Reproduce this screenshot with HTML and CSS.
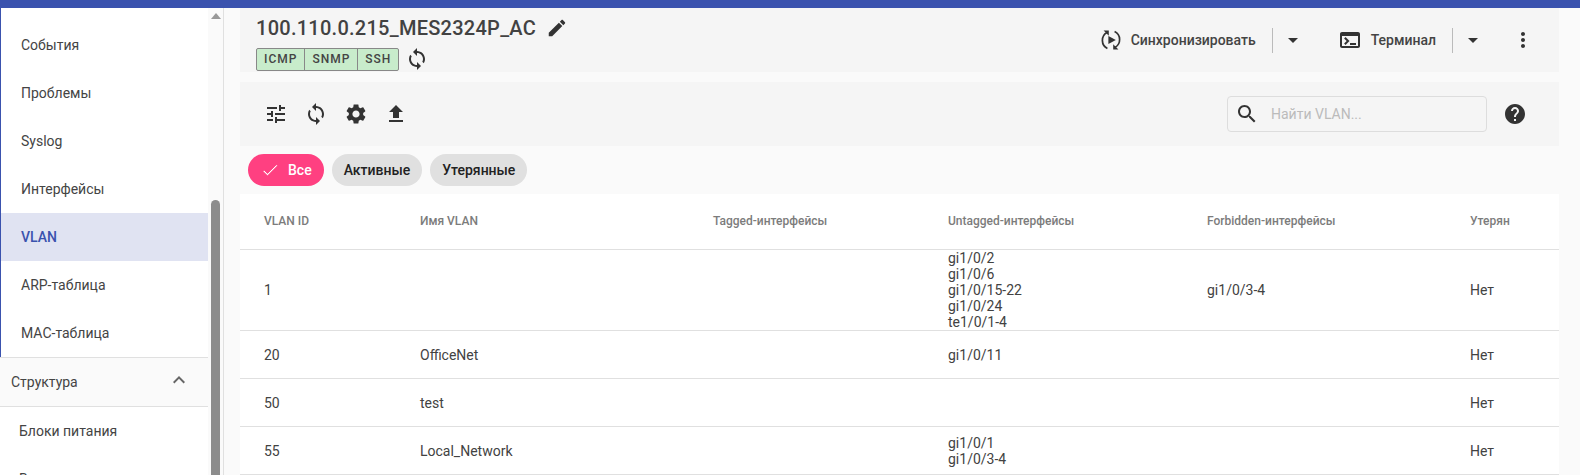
FILE: index.html
```html
<!DOCTYPE html>
<html lang="ru">
<head>
    <meta charset="UTF-8">
    <title>VLAN</title>
    <link rel="stylesheet" href="styles.css">
</head>
<body>
<div class="topBar"></div>
<div class="layout">
    <div class="sidebar">
        <div class="nav">
            <ul class="navGroup">
                <li>События</li>
                <li>Проблемы</li>
                <li>Syslog</li>
                <li>Интерфейсы</li>
                <li class="active">VLAN</li>
                <li>ARP-таблица</li>
                <li>MAC-таблица</li>
            </ul>
            <div class="navHead">
                <span>Структура</span>
                <svg class="icon" viewBox="0 0 24 24"><path d="M12 8l-6 6 1.41 1.41L12 10.83l4.59 4.58L18 14z"/></svg>
            </div>
            <ul class="navSub">
                <li>Блоки питания</li>
                <li>Вентиляторы</li>
            </ul>
        </div>
        <div class="scrollBar">
            <div class="scrollUp"></div>
            <div class="scrollThumb"></div>
        </div>
    </div>
    <div class="main">
        <div class="header">
            <div class="devInfo">
                <div class="devTitle">
                    <span>100.110.0.215_MES2324P_AC</span>
                    <svg class="icon editIcon" viewBox="0 0 24 24"><path d="M3 17.25V21h3.75L17.81 9.94l-3.75-3.75L3 17.25zM20.71 7.04c.39-.39.39-1.02 0-1.41l-2.34-2.34c-.39-.39-1.02-.39-1.41 0l-1.83 1.83 3.75 3.75 1.83-1.83z"/></svg>
                </div>
                <div class="devStatus">
                    <div class="badges">
                        <span>ICMP</span>
                        <span>SNMP</span>
                        <span>SSH</span>
                    </div>
                    <svg class="icon" viewBox="0 0 24 24"><path d="M12 4V1L8 5l4 4V6c3.31 0 6 2.69 6 6 0 1.01-.25 1.97-.7 2.8l1.46 1.46C19.54 15.03 20 13.57 20 12c0-4.42-3.58-8-8-8zm0 14c-3.31 0-6-2.69-6-6 0-1.01.25-1.97.7-2.8L5.24 7.74C4.46 8.97 4 10.43 4 12c0 4.42 3.58 8 8 8v3l4-4-4-4v3z"/></svg>
                </div>
            </div>
            <div class="actions">
                <svg class="icon" viewBox="0 0 24 24">
                    <path d="M9.4 8v8l7.4-4z"/>
                    <path d="M8 4.6A8.9 8.9 0 0 0 8.4 20.4" fill="none" stroke="#333" stroke-width="1.7"/>
                    <path d="M16 19.4A8.9 8.9 0 0 0 15.6 3.6" fill="none" stroke="#333" stroke-width="1.7"/>
                    <path d="M4.6 2.6h5.2v5.2zM19.4 21.4h-5.2v-5.2z"/>
                </svg>
                <span class="actionText">Синхронизировать</span>
                <i class="divider"></i>
                <svg class="icon dropIcon" viewBox="0 0 24 24"><path d="M7 10l5 5 5-5z"/></svg>
                <svg class="icon termIcon" viewBox="0 0 24 24"><path d="M20 4H4c-1.1 0-2 .9-2 2v12c0 1.1.9 2 2 2h16c1.1 0 2-.9 2-2V6c0-1.1-.9-2-2-2zm0 14H4V8h16v10zm-2-1h-6v-2h6v2zM7.5 17l-1.41-1.41L8.67 13l-2.59-2.59L7.5 9l4 4-4 4z"/></svg>
                <span class="actionText termText">Терминал</span>
                <i class="divider"></i>
                <svg class="icon dropIcon" viewBox="0 0 24 24"><path d="M7 10l5 5 5-5z"/></svg>
                <svg class="icon moreIcon" viewBox="0 0 24 24"><path d="M12 8c1.1 0 2-.9 2-2s-.9-2-2-2-2 .9-2 2 .9 2 2 2zm0 2c-1.1 0-2 .9-2 2s.9 2 2 2 2-.9 2-2-.9-2-2-2zm0 6c-1.1 0-2 .9-2 2s.9 2 2 2 2-.9 2-2-.9-2-2-2z"/></svg>
            </div>
        </div>
        <div class="toolbar">
            <div class="tools">
                <svg class="icon" viewBox="0 0 24 24"><path d="M3 17v2h6v-2H3zM3 5v2h10V5H3zm10 16v-2h8v-2h-8v-2h-2v6h2zM7 9v2H3v2h4v2h2V9H7zm14 4v-2H11v2h10zm-6-4h2V7h4V5h-4V3h-2v6z"/></svg>
                <svg class="icon" viewBox="0 0 24 24"><path d="M12 4V1L8 5l4 4V6c3.31 0 6 2.69 6 6 0 1.01-.25 1.97-.7 2.8l1.46 1.46C19.54 15.03 20 13.57 20 12c0-4.42-3.58-8-8-8zm0 14c-3.31 0-6-2.69-6-6 0-1.01.25-1.97.7-2.8L5.24 7.74C4.46 8.97 4 10.43 4 12c0 4.42 3.58 8 8 8v3l4-4-4-4v3z"/></svg>
                <svg class="icon" viewBox="0 0 24 24"><path d="M19.14 12.94c.04-.3.06-.61.06-.94 0-.32-.02-.64-.07-.94l2.03-1.58c.18-.14.23-.41.12-.61l-1.92-3.32c-.12-.22-.37-.29-.59-.22l-2.39.96c-.5-.38-1.03-.7-1.62-.94l-.36-2.54c-.04-.24-.24-.41-.48-.41h-3.84c-.24 0-.43.17-.47.41l-.36 2.54c-.59.24-1.13.57-1.62.94l-2.39-.96c-.22-.08-.47 0-.59.22L2.74 8.87c-.12.21-.08.47.12.61l2.03 1.58c-.05.3-.09.63-.09.94s.02.64.07.94l-2.03 1.58c-.18.14-.23.41-.12.61l1.92 3.32c.12.22.37.29.59.22l2.39-.96c.5.38 1.03.7 1.62.94l.36 2.54c.05.24.24.41.48.41h3.84c.24 0 .44-.17.47-.41l.36-2.54c.59-.24 1.13-.56 1.62-.94l2.39.96c.22.08.47 0 .59-.22l1.92-3.32c.12-.22.07-.47-.12-.61l-2.01-1.58zM12 15.6c-1.98 0-3.6-1.62-3.6-3.6s1.62-3.6 3.6-3.6 3.6 1.62 3.6 3.6-1.62 3.6-3.6 3.6z"/></svg>
                <svg class="icon" viewBox="0 0 24 24"><path d="M9 16h6v-6h4l-7-7-7 7h4zm-4 2h14v2H5z"/></svg>
            </div>
            <div class="searchBox">
                <svg class="icon" viewBox="0 0 24 24"><path d="M15.5 14h-.79l-.28-.27C15.41 12.59 16 11.11 16 9.5 16 5.91 13.09 3 9.5 3S3 5.91 3 9.5 5.91 16 9.5 16c1.61 0 3.09-.59 4.23-1.57l.27.28v.79l5 4.99L20.49 19l-4.99-5zm-6 0C7.01 14 5 11.99 5 9.5S7.01 5 9.5 5 14 7.01 14 9.5 11.99 14 9.5 14z"/></svg>
                <span>Найти VLAN...</span>
            </div>
            <svg class="icon helpIcon" viewBox="0 0 24 24"><path d="M12 2C6.48 2 2 6.48 2 12s4.48 10 10 10 10-4.48 10-10S17.52 2 12 2zm1 17h-2v-2h2v2zm2.07-7.75l-.9.92C13.45 12.9 13 13.5 13 15h-2v-.5c0-1.1.45-2.1 1.17-2.83l1.24-1.26c.37-.36.59-.86.59-1.41 0-1.1-.9-2-2-2s-2 .9-2 2H8c0-2.21 1.79-4 4-4s4 1.79 4 4c0 .88-.36 1.68-.93 2.25z"/></svg>
        </div>
        <div class="chips">
            <div class="chip chipOn">
                <svg viewBox="0 0 24 24"><path d="M9 16.17L4.83 12l-1.42 1.41L9 19 21 7l-1.41-1.41z"/></svg>
                Все
            </div>
            <div class="chip">Активные</div>
            <div class="chip">Утерянные</div>
        </div>
        <table class="vlanTable">
            <colgroup>
                <col class="c1"><col class="c2"><col class="c3"><col class="c4"><col class="c5"><col>
            </colgroup>
            <thead>
                <tr>
                    <th>VLAN ID</th>
                    <th>Имя VLAN</th>
                    <th>Tagged-интерфейсы</th>
                    <th>Untagged-интерфейсы</th>
                    <th>Forbidden-интерфейсы</th>
                    <th>Утерян</th>
                </tr>
            </thead>
            <tbody>
                <tr>
                    <td>1</td>
                    <td></td>
                    <td></td>
                    <td>gi1/0/2<br>gi1/0/6<br>gi1/0/15-22<br>gi1/0/24<br>te1/0/1-4</td>
                    <td>gi1/0/3-4</td>
                    <td>Нет</td>
                </tr>
                <tr>
                    <td>20</td>
                    <td>OfficeNet</td>
                    <td></td>
                    <td>gi1/0/11</td>
                    <td></td>
                    <td>Нет</td>
                </tr>
                <tr>
                    <td>50</td>
                    <td>test</td>
                    <td></td>
                    <td></td>
                    <td></td>
                    <td>Нет</td>
                </tr>
                <tr>
                    <td>55</td>
                    <td>Local_Network</td>
                    <td></td>
                    <td>gi1/0/1<br>gi1/0/3-4</td>
                    <td></td>
                    <td>Нет</td>
                </tr>
            </tbody>
        </table>
    </div>
</div>
</body>
</html>
```

FILE: styles.css
```css
*{
    margin: 0;
    padding: 0;
    box-sizing: border-box;
}
html,body
{
    height: 475px;
    overflow: hidden;
}
body
{
    font-family: Roboto, "Liberation Sans", sans-serif;
    font-size: 14px;
    color: #444;
    background-color: #fafafa;
}
ul
{
    list-style: none;
}
.icon
{
    width: 24px;
    height: 24px;
    flex: none;
    fill: #333;
}
.topBar
{
    height: 8px;
    background-color: #3a52ae;
}
.layout
{
    display: flex;
    height: 467px;
}

/* left menu */
.sidebar
{
    width: 224px;
    flex: none;
    display: flex;
    border-right: 1px solid #e0e0e0;
    overflow: hidden;
}
.nav
{
    width: 208px;
    flex: none;
    background-color: #fff;
    overflow: hidden;
}
.navGroup
{
    border-left: 1px solid #3a52ae;
    padding-top: 13px;
}
.navGroup li
{
    height: 48px;
    line-height: 48px;
    padding-left: 20px;
}
.navGroup .active
{
    background-color: #e0e3f2;
    color: #3a52ae;
    font-weight: 500;
}
.navHead
{
    height: 50px;
    display: flex;
    align-items: center;
    justify-content: space-between;
    padding: 0 17px 0 11px;
    background-color: #fafafa;
    border-top: 1px solid #e0e0e0;
    border-bottom: 1px solid #e0e0e0;
}
.navHead .icon
{
    fill: #666;
    margin-top: -4px;
}
.navSub li
{
    height: 48px;
    line-height: 48px;
    padding-left: 19px;
}
.scrollBar
{
    flex: 1;
    background-color: #fafafa;
    padding-left: 3px;
}
.scrollUp
{
    width: 0;
    height: 0;
    margin: 5px 0 0 0;
    border-left: 5px solid transparent;
    border-right: 5px solid transparent;
    border-bottom: 6px solid #999;
}
.scrollThumb
{
    width: 9px;
    height: 300px;
    margin-top: 181px;
    border-radius: 5px 5px 0 0;
    background-color: #8c8c8c;
}

/* right part */
.main
{
    flex: 1;
    min-width: 0;
    padding: 0 21px 0 16px;
}
.header
{
    height: 64px;
    display: flex;
    justify-content: space-between;
    padding: 7px 24px 0 16px;
    background-color: #f5f5f5;
}
.devTitle
{
    display: flex;
    align-items: center;
    gap: 10px;
    font-size: 20px;
    font-weight: 500;
    line-height: 26px;
    letter-spacing: .26px;
    color: #424242;
}
.editIcon
{
    width: 22px;
    height: 22px;
}
.devStatus
{
    display: flex;
    align-items: center;
    gap: 6px;
    margin-top: 6px;
}
.badges
{
    display: flex;
    height: 23px;
    border: 1px solid #888;
    border-radius: 2px;
    background-color: #c8eccb;
}
.badges span
{
    padding: 0 7px;
    line-height: 21px;
    font-size: 12px;
    font-weight: 500;
    letter-spacing: 1px;
    color: #444;
    border-left: 1px solid #888;
}
.badges span:first-child
{
    border-left: 0;
}
.actions
{
    display: flex;
    align-items: center;
    height: 50px;
    font-weight: 500;
    color: #444;
}
.actionText
{
    margin-left: 8px;
}
.termText
{
    margin-left: 9px;
}
.divider
{
    width: 1px;
    height: 25px;
    margin-left: 16px;
    background-color: #bbb;
}
.dropIcon
{
    margin-left: 8px;
}
.termIcon
{
    margin-left: 33px;
}
.moreIcon
{
    margin-left: 26px;
}
.toolbar
{
    height: 64px;
    margin-top: 10px;
    display: flex;
    align-items: center;
    padding: 0 32px 0 24px;
    background-color: #f5f5f5;
}
.tools
{
    display: flex;
    gap: 16px;
    flex: 1;
}
.searchBox
{
    width: 260px;
    height: 36px;
    display: flex;
    align-items: center;
    gap: 12px;
    padding-left: 7px;
    border: 1px solid #ddd;
    border-radius: 4px;
    color: #bbb;
}
.helpIcon
{
    margin-left: 16px;
}
.chips
{
    display: flex;
    gap: 8px;
    padding: 8px 0 8px 8px;
}
.chip
{
    height: 32px;
    line-height: 32px;
    padding: 0 12px;
    border-radius: 16px;
    background-color: #e0e0e0;
    font-weight: 500;
    color: #222;
}
.chipOn
{
    display: flex;
    align-items: center;
    gap: 8px;
    background-color: #ff4081;
    color: #fff;
}
.chipOn svg
{
    width: 20px;
    height: 20px;
    fill: #fff;
    stroke: #ff4081;
    stroke-width: 1;
}

/* table */
.vlanTable
{
    width: 100%;
    table-layout: fixed;
    border-collapse: collapse;
    background-color: #fff;
}
.c1{width: 156px;}
.c2{width: 293px;}
.c3{width: 235px;}
.c4{width: 259px;}
.c5{width: 263px;}
.vlanTable th
{
    height: 55px;
    padding-left: 24px;
    text-align: left;
    font-size: 12px;
    font-weight: 500;
    color: #7c7c7c;
    border-bottom: 1px solid #e0e0e0;
}
.vlanTable td
{
    height: 48px;
    padding-left: 24px;
    line-height: 16px;
    color: #424242;
    border-bottom: 1px solid #e0e0e0;
}
.vlanTable tr + tr td
{
    padding-top: 1px;
}
```
